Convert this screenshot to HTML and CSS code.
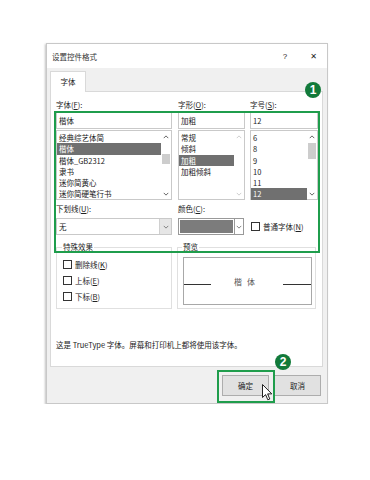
FILE: index.html
```html
<!DOCTYPE html>
<html lang="zh-CN">
<head>
  <meta charset="UTF-8">
  <title>设置控件格式</title>
  <link rel="stylesheet" href="styles.css">
</head>
<body>
  <div class="dialog">
    <div class="titlebar">
      <span class="title">设置控件格式</span>
      <span class="help">?</span>
      <span class="close">✕</span>
    </div>

    <div class="tabs">
      <div class="tab">字体</div>
    </div>

    <div class="panel">
      <div class="grid">
        <div class="col">
          <div class="label">字体(<u>F</u>):</div>
          <div class="textbox">楷体</div>
          <div class="listbox">
            <ul class="items">
              <li>经典综艺体简</li>
              <li class="selected">楷体</li>
              <li>楷体_GB2312</li>
              <li>隶书</li>
              <li>迷你简黄心</li>
              <li>迷你简硬笔行书</li>
            </ul>
            <div class="scrollbar">
              <svg class="arrow" viewBox="0 0 8 5"><polyline points="1,4 4,1 7,4"/></svg>
              <div class="track"><div class="thumb thumb-font"></div></div>
              <svg class="arrow" viewBox="0 0 8 5"><polyline points="1,1 4,4 7,1"/></svg>
            </div>
          </div>
        </div>

        <div class="col">
          <div class="label">字形(<u>O</u>):</div>
          <div class="textbox">加粗</div>
          <div class="listbox">
            <ul class="items">
              <li>常规</li>
              <li>倾斜</li>
              <li class="selected">加粗</li>
              <li>加粗倾斜</li>
            </ul>
            <div class="scrollbar disabled">
              <svg class="arrow" viewBox="0 0 8 5"><polyline points="1,4 4,1 7,4"/></svg>
              <div class="track"></div>
              <svg class="arrow" viewBox="0 0 8 5"><polyline points="1,1 4,4 7,1"/></svg>
            </div>
          </div>
        </div>

        <div class="col">
          <div class="label">字号(<u>S</u>):</div>
          <div class="textbox">12</div>
          <div class="listbox">
            <ul class="items">
              <li>6</li>
              <li>8</li>
              <li>9</li>
              <li>10</li>
              <li>11</li>
              <li class="selected">12</li>
            </ul>
            <div class="scrollbar">
              <svg class="arrow" viewBox="0 0 8 5"><polyline points="1,4 4,1 7,4"/></svg>
              <div class="track"><div class="thumb thumb-size"></div></div>
              <svg class="arrow" viewBox="0 0 8 5"><polyline points="1,1 4,4 7,1"/></svg>
            </div>
          </div>
        </div>
      </div>

      <div class="grid row2">
        <div class="col">
          <div class="label">下划线(<u>U</u>):</div>
          <div class="dropdown">
            <span class="value">无</span>
            <span class="drop-btn">
              <svg class="arrow" viewBox="0 0 8 5"><polyline points="1,1 4,4 7,1"/></svg>
            </span>
          </div>
        </div>
        <div class="col">
          <div class="label">颜色(<u>C</u>):</div>
          <div class="dropdown color">
            <span class="swatch"></span>
            <span class="drop-btn">
              <svg class="arrow" viewBox="0 0 8 5"><polyline points="1,1 4,4 7,1"/></svg>
            </span>
          </div>
        </div>
        <div class="col">
          <div class="label"></div>
          <label class="check normal"><span class="box"></span>普通字体(<u>N</u>)</label>
        </div>
      </div>

      <div class="groups">
        <fieldset class="group">
          <legend>特殊效果</legend>
          <label class="check"><span class="box"></span>删除线(<u>K</u>)</label>
          <label class="check"><span class="box"></span>上标(<u>E</u>)</label>
          <label class="check"><span class="box"></span>下标(<u>B</u>)</label>
        </fieldset>
        <fieldset class="group preview">
          <legend>预览</legend>
          <div class="sample">
            <span class="rule left"></span>
            <span class="sample-text">楷体</span>
            <span class="rule right"></span>
          </div>
        </fieldset>
      </div>

      <p class="note">这是 TrueType 字体。屏幕和打印机上都将使用该字体。</p>
    </div>

    <div class="buttons">
      <button class="btn">确定</button>
      <button class="btn">取消</button>
    </div>

    <!-- annotations -->
    <div class="mark mark-fields"></div>
    <div class="badge badge-1">1</div>
    <div class="mark mark-ok"></div>
    <div class="badge badge-2">2</div>
    <svg class="cursor" viewBox="0 0 11 17">
      <path d="M0.5 0.5 L0.5 13.5 L3.6 10.6 L5.8 15.8 L7.8 15 L5.6 9.9 L9.8 9.9 Z"/>
    </svg>
  </div>
</body>
</html>
```

FILE: styles.css
```css
* {
  box-sizing: border-box;
}

body {
  margin: 0;
  background-color: #fff;
  font-family: "Noto Sans CJK SC", "Noto Sans", sans-serif;
  font-size: 7.5px;
  color: #222;
}

u {
  text-decoration: underline;
  text-underline-offset: 1px;
}

.dialog {
  position: relative;
  width: 282px;
  height: 361px;
  margin: 43px 0 0 46px;
  background-color: #f0f0f0;
  border: 1px solid #c8c8c8;
  box-shadow: -1px 1px 2px rgba(0, 0, 0, 0.25);
}

.titlebar {
  display: flex;
  align-items: center;
  height: 24px;
  padding: 0 10px 0 5px;
  background-color: #fff;
}

.title {
  flex-grow: 1;
  font-size: 7.5px;
  color: #333;
}

.help {
  font-family: "Liberation Sans", sans-serif;
  font-size: 8px;
  margin-right: 23px;
}

.close {
  font-family: "DejaVu Sans", sans-serif;
  font-size: 8px;
}

.tabs {
  display: flex;
  padding: 3px 0 0 3px;
}

.tab {
  position: relative;
  z-index: 1;
  width: 36px;
  height: 21px;
  margin-bottom: -1px;
  padding-top: 4px;
  text-align: center;
  background-color: #fff;
  border: 1px solid #d9d9d9;
  border-bottom: none;
}

.panel {
  height: 276px;
  margin: 0 4px 0 3px;
  padding: 7px 5px 0 5px;
  background-color: #fff;
  border: 1px solid #d9d9d9;
}

.grid {
  display: grid;
  grid-template-columns: 116px 67px 67px;
  column-gap: 6px;
}

.grid .col:last-child {
  margin-left: -1px;
}

.label {
  height: 13px;
  line-height: 12px;
}

.textbox {
  height: 17px;
  padding-left: 2px;
  line-height: 15px;
  border: 1px solid #c9c9c9;
}

.listbox {
  display: flex;
  height: 70px;
  margin-top: 1px;
  border: 1px solid #c9c9c9;
}

.items {
  flex-grow: 1;
  list-style: none;
  margin: 0;
  padding: 1px 0 0 0;
}

.items li {
  height: 11.3px;
  line-height: 11.3px;
  padding-left: 2px;
  white-space: nowrap;
}

.items li.selected {
  background-color: #707070;
  color: #fff;
}

.scrollbar {
  display: flex;
  flex-direction: column;
  width: 10px;
  background-color: #fff;
}

.arrow {
  display: block;
  width: 6px;
  height: 4px;
  margin: 4px auto 3px;
  fill: none;
  stroke: #555;
  stroke-width: 1.2;
}

.scrollbar .track {
  flex-grow: 1;
}

.thumb {
  width: 8px;
  margin: 0 auto;
  background-color: #cdcdcd;
}

.thumb-font {
  height: 10px;
  margin-top: 12px;
}

.thumb-size {
  height: 16px;
  margin-top: 1px;
}

.scrollbar.disabled .arrow {
  stroke: #c8c8c8;
}

.row2 .label {
  margin-top: 3px;
  height: 15px;
}

.dropdown {
  display: flex;
  height: 17px;
  border: 1px solid #c9c9c9;
}

.dropdown .value {
  flex-grow: 1;
  padding-left: 2px;
  line-height: 15px;
}

.drop-btn {
  display: flex;
  align-items: center;
  width: 12px;
  background-color: #e6e6e6;
  border-left: 1px solid #d0d0d0;
}

.drop-btn .arrow {
  margin: 0 auto;
  stroke: #777;
}

.dropdown.color {
  width: 66px;
  border-color: #999;
}

.dropdown.color .swatch {
  flex-grow: 1;
  margin: 1px;
  background-color: #7c7c7c;
}

.dropdown.color .drop-btn {
  width: 9px;
  background-color: #fff;
  border-left-color: #999;
}

.check {
  display: flex;
  align-items: center;
  height: 16px;
  white-space: nowrap;
}

.check .box {
  width: 9px;
  height: 9px;
  margin-right: 3px;
  border: 1px solid #333;
  background-color: #fff;
}

.check.normal {
  height: 17px;
  margin-left: 1px;
}

.groups {
  display: grid;
  grid-template-columns: 116px 139px;
  column-gap: 5px;
  margin-top: 6px;
}

.group {
  margin: 0;
  padding: 3px 3px 3px 6px;
  border: 1px solid #e0e0e0;
}

.group legend {
  padding: 0 1px;
  margin-left: -1px;
  line-height: 12px;
  height: 12px;
}

.preview {
  padding: 4px 3px 3px 5px;
}

.sample {
  display: flex;
  align-items: center;
  height: 48px;
  border: 1px solid #a8a8a8;
}

.rule {
  height: 1px;
  margin-top: 7px;
  background-color: #333;
}

.rule.left {
  width: 27px;
}

.rule.right {
  width: 28px;
}

.sample-text {
  flex-grow: 1;
  text-align: center;
  letter-spacing: 5px;
  font-size: 8px;
  color: #555;
}

.note {
  margin: 30px 0 0 0;
  line-height: 12px;
}

.buttons {
  display: flex;
  justify-content: flex-end;
  gap: 5px;
  padding: 8px 6px 0 0;
}

.btn {
  width: 47px;
  height: 21px;
  padding: 0;
  font-family: "Noto Sans CJK SC", sans-serif;
  font-size: 7.5px;
  color: #222;
  background-color: #e1e1e1;
  border: 1px solid #adadad;
}

.mark {
  position: absolute;
  border: 2px solid #1f9d4c;
}

.mark-fields {
  left: 7px;
  top: 67px;
  width: 266px;
  height: 142px;
}

.mark-ok {
  left: 170px;
  top: 326px;
  width: 58px;
  height: 33px;
}

.badge {
  position: absolute;
  width: 16px;
  height: 16px;
  border-radius: 50%;
  background-color: #127a3a;
  color: #fff;
  font-family: "Liberation Sans", sans-serif;
  font-weight: bold;
  font-size: 12px;
  line-height: 16px;
  text-align: center;
}

.badge-1 {
  left: 258px;
  top: 38px;
}

.badge-2 {
  left: 228px;
  top: 310px;
}

.cursor {
  position: absolute;
  left: 215px;
  top: 340px;
  width: 11px;
  height: 17px;
  fill: #fff;
  stroke: #222;
  stroke-width: 1;
}
```
